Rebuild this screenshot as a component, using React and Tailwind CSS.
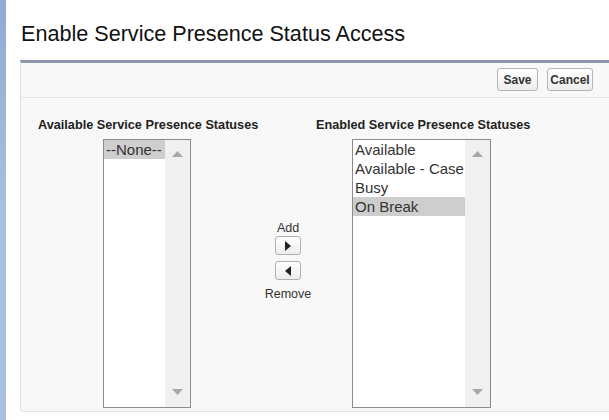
import React from "react";

const font = { fontFamily: '"Liberation Sans", Arial, sans-serif' };

const ScrollTrack = () => (
  <div className="w-[25px] bg-[#f0f0f0] flex flex-col items-center justify-between pt-[11px] pb-[12px]">
    <svg width="11" height="6" viewBox="0 0 11 6">
      <polygon points="0,6 5.5,0 11,6" fill="#a8a8a8" />
    </svg>
    <svg width="11" height="6" viewBox="0 0 11 6">
      <polygon points="0,0 11,0 5.5,6" fill="#a8a8a8" />
    </svg>
  </div>
);

const ListBox = ({ items, selected, width }) => (
  <div className={`flex h-[269px] border border-[#8c8c8c] bg-white ${width}`}>
    <div className="flex-1 flex flex-col">
      {items.map((item) => (
        <div
          key={item}
          className={`h-[19px] pl-[2px] text-[15px] leading-[19px] text-[#333] whitespace-nowrap ${item === selected ? "bg-[#cecece]" : ""}`}
        >
          {item}
        </div>
      ))}
    </div>
    <ScrollTrack />
  </div>
);

const Btn = ({ children, className = "" }) => (
  <button
    className={`h-[23px] rounded-[3px] border border-[#b5b5b5] bg-gradient-to-b from-white to-[#ededed] text-[12px] font-bold text-[#333] ${className}`}
  >
    {children}
  </button>
);

const ArrowBtn = ({ dir }) => (
  <button className="w-[26px] h-[19px] rounded-[3px] border border-[#b0b0b0] bg-gradient-to-b from-white to-[#ececec] flex items-center justify-center">
    <svg width="6" height="10" viewBox="0 0 6 10">
      {dir === "right" ? (
        <polygon points="0,0 6,5 0,10" fill="#222" />
      ) : (
        <polygon points="6,0 0,5 6,10" fill="#222" />
      )}
    </svg>
  </button>
);

export default function App() {
  return (
    <div className="flex w-[609px] h-[420px] overflow-hidden bg-white" style={font}>
      <div className="w-[6px] shrink-0 bg-gradient-to-b from-[#8fabd3] via-[#a9bfdf] to-[#aac0de]" />
      <div className="flex-1 pl-[14px]">
        <h1 className="pt-[21px] pl-[1px] text-[21.6px] leading-[26px] text-[#111] whitespace-nowrap">
          Enable Service Presence Status Access
        </h1>

        <div className="mt-[13px] w-[600px] rounded-b-[4px] border border-[#e2e2e2] border-t-[3px] border-t-[#8d97ac] bg-[#f8f8f8]">
          <div className="flex justify-end gap-[9px] h-[35px] pt-[5px] pr-[26px] border-b border-[#e4e4e4]">
            <Btn className="w-[41px]">Save</Btn>
            <Btn className="w-[46px]">Cancel</Btn>
          </div>

          <div className="flex pl-[17px] pt-[20px] pb-[3px]">
            <div className="w-[222px]">
              <div className="text-[12.7px] font-bold text-[#222] leading-[15px] whitespace-nowrap">
                Available Service Presence Statuses
              </div>
              <div className="mt-[6px] ml-[65px]">
                <ListBox items={["--None--"]} selected="--None--" width="w-[88px]" />
              </div>
            </div>

            <div className="w-[56px] flex flex-col items-center pt-[103px] text-[12.5px] text-[#333]">
              <div className="leading-[14px]">Add</div>
              <div className="mt-[1px] flex flex-col gap-[6px]">
                <ArrowBtn dir="right" />
                <ArrowBtn dir="left" />
              </div>
              <div className="leading-[14px] mt-[7px]">Remove</div>
            </div>

            <div>
              <div className="text-[12.7px] font-bold text-[#222] leading-[15px] whitespace-nowrap">
                Enabled Service Presence Statuses
              </div>
              <div className="mt-[6px] ml-[36px]">
                <ListBox
                  items={["Available", "Available - Case", "Busy", "On Break"]}
                  selected="On Break"
                  width="w-[139px]"
                />
              </div>
            </div>
          </div>
        </div>
      </div>
    </div>
  );
}
